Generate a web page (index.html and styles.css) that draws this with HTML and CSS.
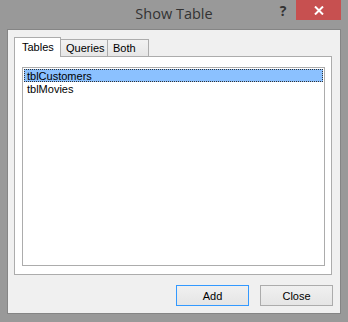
FILE: index.html
```html
<!DOCTYPE html>
<html lang="en">
<head>
<meta charset="UTF-8" />
<meta name="viewport" content="width=device-width, initial-scale=1.0" />
<title>Show Table</title>
<link rel="stylesheet" href="styles.css">
</head>
<body>

<div class="window">
  <div class="titlebar">
    <div></div>
    <div class="title">Show Table</div>
    <div class="controls">
      <span class="help">?</span>
      <span class="close-x">
        <svg width="10" height="9" viewBox="0 0 10 9">
          <path d="M1 0.5 L9 8.5 M9 0.5 L1 8.5" stroke="#fff" stroke-width="2" fill="none" />
        </svg>
      </span>
    </div>
  </div>

  <div class="client">
    <div class="tabs">
      <div class="tab active">Tables</div>
      <div class="tab">Queries</div>
      <div class="tab">Both</div>
    </div>
    <div class="panel">
      <ul class="listbox">
        <li class="item selected">tblCustomers</li>
        <li class="item">tblMovies</li>
      </ul>
    </div>
    <div class="buttons">
      <button type="button" class="btn default">Add</button>
      <button type="button" class="btn">Close</button>
    </div>
  </div>
</div>

</body>
</html>
```

FILE: styles.css
```css
* {
  box-sizing: border-box;
  margin: 0;
  padding: 0;
}

body {
  background: #999;
  font-family: 'Liberation Sans', Arial, sans-serif;
  font-size: 11px;
  color: #000;
}

.window {
  width: 348px;
  height: 322px;
  display: flex;
  flex-direction: column;
}

/* Title bar */
.titlebar {
  height: 29px;
  display: grid;
  grid-template-columns: 1fr auto 1fr;
}

.title {
  font-family: 'Open Sans', 'Noto Sans', sans-serif;
  font-size: 14.5px;
  color: #333;
  padding-top: 4px;
}

.controls {
  display: flex;
  justify-content: flex-end;
  align-items: flex-start;
  padding-right: 7px;
}

.help {
  width: 26px;
  height: 20px;
  text-align: center;
  font-family: 'Open Sans', 'Noto Sans', sans-serif;
  font-weight: bold;
  font-size: 14px;
  line-height: 22px;
  color: #333;
}

.close-x {
  width: 45px;
  height: 20px;
  background: #c75050;
  display: flex;
  align-items: center;
  justify-content: center;
  padding-top: 1px;
}

/* Dialog body */
.client {
  flex: 1;
  margin: 0 7px 8px 7px;
  border: 1px solid #858585;
  background: #f0f0f0;
  display: flex;
  flex-direction: column;
  padding: 7px 7px 7px 6px;
}

.tabs {
  display: flex;
  align-items: flex-end;
  margin-bottom: -1px;
}

.tab {
  height: 18px;
  padding: 0 5px;
  border: 1px solid #acacac;
  border-bottom: none;
  background: linear-gradient(#f2f2f2, #e6e6e6);
  line-height: 16px;
  margin-left: -1px;
}

.tab:first-child {
  margin-left: 0;
}

.tab.active {
  position: relative;
  z-index: 1;
  height: 20px;
  width: 47px;
  background: #fff;
  line-height: 18px;
  padding: 0 7px;
}

.tab:nth-child(2) {
  width: 48px;
}

.tab:nth-child(3) {
  width: 42px;
}

.panel {
  height: 219px;
  margin-right: 1px;
  border: 1px solid #acacac;
  background: #fff;
  padding: 10px 6px 8px 7px;
}

.listbox {
  list-style: none;
  height: 100%;
  border: 1px solid #acacac;
  padding: 1px;
}

.item {
  height: 13px;
  line-height: 12px;
  padding-left: 2px;
  border: 1px solid transparent;
}

.item.selected {
  background: #8bc1ff;
  border: 1px dotted #333;
}

/* Buttons */
.buttons {
  display: flex;
  justify-content: flex-end;
  gap: 11px;
  margin-top: 10px;
}

.btn {
  width: 73px;
  height: 21px;
  border: 1px solid #acacac;
  background: linear-gradient(#f0f0f0, #e5e5e5);
  font-family: 'Liberation Sans', Arial, sans-serif;
  font-size: 11px;
  color: #000;
}

.btn.default {
  border-color: #3399ff;
}
```
